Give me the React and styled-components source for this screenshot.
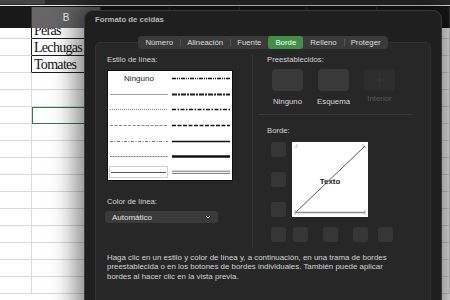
import React from "react";
import styled, { createGlobalStyle } from "styled-components";

const Global = createGlobalStyle`
  html, body { margin: 0; padding: 0; background: #fff; }
  body { font-family: "Liberation Sans", Arial, sans-serif; }
  #root { width: 450px; height: 300px; }
`;

const Screen = styled.div`
  position: relative;
  width: 450px;
  height: 300px;
  overflow: hidden;
  background: #fff;
`;

/* ---------- spreadsheet ---------- */
const Sheet = styled.div`
  display: flex;
  flex-direction: column;
`;
const TopBar = styled.div`
  height: 5px;
  background: #2a2a2a;
  display: flex;
`;
const TopTab = styled.div`
  width: 45px;
  height: 4px;
  background: #444;
`;
const TopRule = styled.div`
  height: 1px;
  background: #ececec;
  border-bottom: 1px solid #111;
`;
const HeaderRow = styled.div`
  position: relative;
  z-index: 1;
  display: flex;
  height: 21px;
  background: #191919;
`;
const HeaderCell = styled.div`
  flex: 0 0 ${(p) => p.$w}px;
  box-sizing: border-box;
  border-right: 1px solid #363636;
  background: ${(p) => (p.$active ? "#666" : "transparent")};
  color: #f2f2f2;
  font-family: "Liberation Sans", Arial, sans-serif;
  font-size: 10px;
  display: flex;
  align-items: center;
  justify-content: center;
`;
const Rows = styled.div`
  margin-top: -6px;
  display: flex;
  flex-direction: column;
`;
const Row = styled.div`
  display: flex;
  height: 17px;
`;
const Cell = styled.div`
  position: relative;
  flex: 0 0 ${(p) => p.$w}px;
  box-sizing: border-box;
  border-right: 1px solid ${(p) => (p.$darkRight ? "#1c1c1c" : "#dadada")};
  border-bottom: 1px solid ${(p) => (p.$darkBottom ? "#1c1c1c" : "#dadada")};
  outline: ${(p) => (p.$selected ? "1.5px solid #2f7a4c" : "none")};
  outline-offset: -1px;
  font-family: "Liberation Serif", "Times New Roman", serif;
  font-size: 14px;
  letter-spacing: -0.7px;
  line-height: 14px;
  color: #111;
  padding-left: 2px;
  display: flex;
  align-items: flex-end;
  white-space: nowrap;
`;

/* ---------- dialog ---------- */
const Dialog = styled.div`
  position: absolute;
  z-index: 5;
  left: 84px;
  top: 10px;
  width: 358px;
  height: 310px;
  box-sizing: border-box;
  background: #1f1f1f;
  border: 1px solid #3a3a3a;
  border-radius: 9px;
  box-shadow: 0 0 26px 8px rgba(0, 0, 0, 0.5);
  padding: 0 10px;
  display: flex;
  flex-direction: column;
  font-family: "Liberation Sans", Arial, sans-serif;
`;
const Title = styled.div`
  margin-top: 4px;
  height: 10px;
  line-height: 10px;
  font-size: 7.8px;
  font-weight: bold;
  color: #b8b8b8;
`;
const TabBar = styled.div`
  position: relative;
  z-index: 1;
  align-self: center;
  margin-top: 11px;
  height: 13px;
  display: flex;
  background: #3a3a3a;
  border-radius: 4px;
`;
const Tab = styled.div`
  position: relative;
  padding: 0 7px;
  height: 13px;
  line-height: 13px;
  font-size: 7.8px;
  color: ${(p) => (p.$active ? "#fff" : "#dedede")};
  background: ${(p) => (p.$active ? "#3f8f45" : "transparent")};
  border-radius: 3px;
  &::before {
    content: "";
    display: ${(p) => (p.$sep ? "block" : "none")};
    position: absolute;
    left: 0;
    top: 3px;
    width: 1px;
    height: 7px;
    background: #555;
  }
`;
const Panel = styled.div`
  margin-top: -7px;
  flex: 1;
  background: #272727;
  border: 1px solid #323232;
  border-radius: 5px;
  padding-top: 11px;
`;
const Columns = styled.div`
  display: grid;
  grid-template-columns: 156px 1fr;
  align-items: start;
`;
const LeftCol = styled.div`
  padding-left: 11px;
  display: flex;
  flex-direction: column;
`;
const RightCol = styled.div`
  border-left: 1px solid #333;
  padding-left: 14px;
  padding-bottom: 6px;
  display: flex;
  flex-direction: column;
`;
const Label = styled.div`
  height: 12px;
  line-height: 12px;
  font-size: 7.7px;
  color: #d6d6d6;
  margin-top: ${(p) => p.$mt || 0}px;
`;
const LineBox = styled.div`
  margin-top: 4px;
  width: 126px;
  height: 111px;
  box-sizing: border-box;
  border: 1px solid #0e0e0e;
  background: #fff;
  display: grid;
  grid-template-columns: 1fr 1fr;
  grid-template-rows: repeat(7, 1fr);
  grid-auto-flow: column;
`;
const LineCell = styled.div`
  display: flex;
  align-items: center;
  justify-content: center;
  padding: 0 2px 0 ${(p) => (p.$selected ? 1 : 2)}px;
  min-width: 0;
`;
const SelectedFrame = styled.div`
  flex: 1;
  height: 12px;
  box-sizing: border-box;
  border: 1px solid #cfcfcf;
  display: flex;
  align-items: center;
  padding: 0 1px;
`;
const NoneText = styled.div`
  font-size: 8px;
  color: #222;
`;
const Dropdown = styled.div`
  margin-top: 3px;
  margin-left: -2px;
  width: 113px;
  height: 12px;
  box-sizing: border-box;
  background: #3a3a3a;
  border-radius: 3px;
  padding: 0 7px;
  display: flex;
  align-items: center;
  justify-content: space-between;
  font-size: 8px;
  color: #e2e2e2;
`;
const PresetRow = styled.div`
  margin-top: 3px;
  margin-left: 5px;
  display: flex;
  gap: 15px;
`;
const Preset = styled.div`
  width: 31px;
  display: flex;
  flex-direction: column;
  align-items: center;
`;
const PresetButton = styled.div`
  width: 31px;
  height: 22px;
  border-radius: 4px;
  background: ${(p) => (p.$disabled ? "#2d2d2d" : "#393939")};
  position: relative;
  overflow: hidden;
`;
const PresetLabel = styled.div`
  margin-top: ${(p) => (p.$disabled ? 3 : 6)}px;
  height: 10px;
  line-height: 10px;
  font-size: 7.8px;
  white-space: nowrap;
  color: ${(p) => (p.$disabled ? "#585858" : "#dadada")};
`;
const HDivider = styled.div`
  margin-top: 7px;
  margin-left: -9px;
  width: 155px;
  height: 1px;
  background: #383838;
`;
const BorderArea = styled.div`
  margin-top: 5px;
  margin-left: 4px;
  display: grid;
  grid-template-columns: 15px 76px;
  column-gap: 6px;
`;
const SideButtons = styled.div`
  height: 75px;
  display: flex;
  flex-direction: column;
  justify-content: space-between;
`;
const BorderButton = styled.div`
  width: 15px;
  height: 15px;
  border-radius: 3px;
  background: #363636;
  margin-left: ${(p) => p.$ml || 0}px;
`;
const Preview = styled.div`
  position: relative;
  width: 76px;
  height: 75px;
  background: #fff;
  display: flex;
  align-items: center;
  justify-content: center;
`;
const PreviewArt = styled.svg`
  position: absolute;
  left: 0;
  top: 0;
`;
const PreviewText = styled.div`
  position: relative;
  font-size: 7.9px;
  font-weight: bold;
  color: #222;
  margin-top: 3px;
`;
const BottomButtons = styled.div`
  margin-top: 10px;
  margin-left: 4px;
  display: flex;
`;
const Description = styled.div`
  margin-top: 5px;
  padding-left: 11px;
  font-size: 7.9px;
  line-height: 9.3px;
  color: #d4d4d4;
`;
const DescLine = styled.div`
  white-space: nowrap;
`;

const widths = [32, 69, 69, 70, 67, 70, 73];

const Line = ({ dash, w = 1, color = "#111", double }) => (
  <svg width="100%" height="5" style={{ display: "block" }}>
    {double ? (
      <>
        <line x1="0" x2="100%" y1="1.2" y2="1.2" stroke={color} strokeWidth="1" />
        <line x1="0" x2="100%" y1="3.4" y2="3.4" stroke={color} strokeWidth="1" />
      </>
    ) : (
      <line
        x1="0"
        x2="100%"
        y1="2.5"
        y2="2.5"
        stroke={color}
        strokeWidth={w}
        strokeDasharray={dash}
      />
    )}
  </svg>
);

const sheetRows = [
  { b: "Peras", boxed: true },
  { b: "Lechugas", boxed: true },
  { b: "Tomates", boxed: true },
  {},
  {},
  { selected: true },
  {},
  {},
  {},
  {},
  {},
  {},
  {},
  {},
  {},
  {},
];

const tabs = ["Número", "Alineación", "Fuente", "Borde", "Relleno", "Proteger"];
const activeTab = 3;

export default function App() {
  return (
    <>
      <Global />
      <Screen>
        <Sheet>
          <TopBar>
            <TopTab />
          </TopBar>
          <TopRule />
          <HeaderRow>
            {widths.map((w, i) => (
              <HeaderCell key={i} $w={w} $active={i === 1}>
                {i === 1 ? "B" : ""}
              </HeaderCell>
            ))}
          </HeaderRow>
          <Rows>
            {sheetRows.map((r, ri) => (
              <Row key={ri}>
                {widths.map((w, ci) => (
                  <Cell
                    key={ci}
                    $w={w}
                    $darkRight={(ci === 0 || ci === 1) && r.boxed}
                    $darkBottom={ci === 1 && r.boxed}
                    $selected={ci === 1 && r.selected}
                  >
                    {ci === 1 ? r.b : ""}
                  </Cell>
                ))}
              </Row>
            ))}
          </Rows>
        </Sheet>

        <Dialog>
          <Title>Formato de celdas</Title>
          <TabBar>
            {tabs.map((t, i) => (
              <Tab
                key={t}
                $active={i === activeTab}
                $sep={i > 0 && i !== activeTab && i !== activeTab + 1}
              >
                {t}
              </Tab>
            ))}
          </TabBar>
          <Panel>
            <Columns>
              <LeftCol>
                <Label>Estilo de línea:</Label>
                <LineBox>
                  <LineCell>
                    <NoneText>Ninguno</NoneText>
                  </LineCell>
                  <LineCell>
                    <Line w={0.8} color="#8a8a8a" />
                  </LineCell>
                  <LineCell>
                    <Line dash="1 1" color="#888" />
                  </LineCell>
                  <LineCell>
                    <Line dash="3 1.5" color="#888" />
                  </LineCell>
                  <LineCell>
                    <Line dash="3 1.5 1 1.5" color="#777" />
                  </LineCell>
                  <LineCell>
                    <Line dash="1 0.6" color="#666" />
                  </LineCell>
                  <LineCell $selected>
                    <SelectedFrame>
                      <Line w={1} color="#555" />
                    </SelectedFrame>
                  </LineCell>

                  <LineCell>
                    <Line dash="4 1 1 1 1 1" w={1.5} />
                  </LineCell>
                  <LineCell>
                    <Line dash="5 1 2 1" w={2} color="#222" />
                  </LineCell>
                  <LineCell>
                    <Line dash="4 1.5 1.5 1.5" w={1.5} />
                  </LineCell>
                  <LineCell>
                    <Line dash="4 1.5" w={1.5} />
                  </LineCell>
                  <LineCell>
                    <Line w={1.3} />
                  </LineCell>
                  <LineCell>
                    <Line w={2.5} />
                  </LineCell>
                  <LineCell>
                    <Line double color="#777" />
                  </LineCell>
                </LineBox>
                <Label $mt={15}>Color de línea:</Label>
                <Dropdown>
                  <span>Automático</span>
                  <svg width="6" height="4" viewBox="0 0 6 4">
                    <path d="M1 1 L3 3 L5 1" fill="none" stroke="#cfcfcf" strokeWidth="1" />
                  </svg>
                </Dropdown>
              </LeftCol>

              <RightCol>
                <Label>Preestablecidos:</Label>
                <PresetRow>
                  <Preset>
                    <PresetButton />
                    <PresetLabel>Ninguno</PresetLabel>
                  </Preset>
                  <Preset>
                    <PresetButton />
                    <PresetLabel>Esquema</PresetLabel>
                  </Preset>
                  <Preset>
                    <PresetButton $disabled>
                      <svg width="31" height="22" style={{ display: "block" }}>
                        <line x1="15.5" x2="15.5" y1="3" y2="19" stroke="#343434" strokeWidth="1" />
                        <line x1="4" x2="27" y1="11" y2="11" stroke="#343434" strokeWidth="1" />
                      </svg>
                    </PresetButton>
                    <PresetLabel $disabled>Interior</PresetLabel>
                  </Preset>
                </PresetRow>
                <HDivider />
                <Label $mt={10}>Borde:</Label>
                <BorderArea>
                  <SideButtons>
                    <BorderButton />
                    <BorderButton />
                    <BorderButton />
                  </SideButtons>
                  <Preview>
                    <PreviewArt width="76" height="75" viewBox="0 0 76 75">
                      <g stroke="#b0b0b0" strokeWidth="0.8" fill="none">
                        <path d="M5 2 V5 H2" />
                        <path d="M71 2 V5 H74" />
                        <path d="M3 68 V73" />
                        <path d="M73 68 V73" />
                      </g>
                      <line x1="3" y1="71" x2="73" y2="4" stroke="#444" strokeWidth="0.9" />
                      <line x1="3" y1="70.5" x2="73" y2="70.5" stroke="#8a8a8a" strokeWidth="1.5" />
                    </PreviewArt>
                    <PreviewText>Texto</PreviewText>
                  </Preview>
                </BorderArea>
                <BottomButtons>
                  <BorderButton />
                  <BorderButton $ml={7} />
                  <BorderButton $ml={15} />
                  <BorderButton $ml={15} />
                  <BorderButton $ml={10} />
                </BottomButtons>
              </RightCol>
            </Columns>
            <Description>
              <DescLine>
                Haga clic en un estilo y color de línea y, a continuación, en una trama de bordes
              </DescLine>
              <DescLine>
                preestablecida o en los botones de bordes individuales. También puede aplicar
              </DescLine>
              <DescLine>bordes al hacer clic en la vista previa.</DescLine>
            </Description>
          </Panel>
        </Dialog>
      </Screen>
    </>
  );
}
